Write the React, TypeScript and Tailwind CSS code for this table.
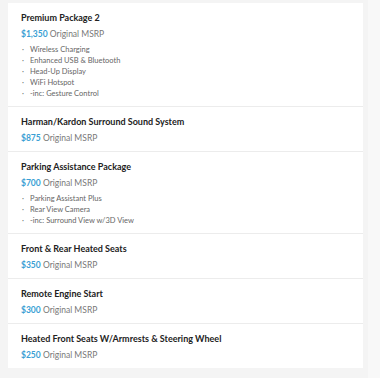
const packages = [
  {
    title: "Premium Package 2",
    price: "$1,350",
    items: ["Wireless Charging", "Enhanced USB & Bluetooth", "Head-Up Display", "WiFi Hotspot", "-inc: Gesture Control"],
  },
  { title: "Harman/Kardon Surround Sound System", price: "$875", items: [] },
  {
    title: "Parking Assistance Package",
    price: "$700",
    items: ["Parking Assistant Plus", "Rear View Camera", "-inc: Surround View w/3D View"],
  },
  { title: "Front & Rear Heated Seats", price: "$350", items: [] },
  { title: "Remote Engine Start", price: "$300", items: [] },
  { title: "Heated Front Seats W/Armrests & Steering Wheel", price: "$250", items: [] },
];

export default function App() {
  return (
    <div
      className="w-[380px] h-[378px] bg-[#f4f4f4] flex"
      style={{ fontFamily: 'Lato, "Open Sans", sans-serif' }}
    >
      <div className="w-[368px] pt-[3px] pl-[8px] pr-[5px]">
        <div className="flex flex-col gap-px bg-[#ececec]">
          {packages.map(p => (
            <div key={p.title} className="bg-white px-[13px] pt-[8px] pb-[6px]">
              <div className="h-[14px] text-[9px] leading-[14px] font-bold text-[#222]">{p.title}</div>
              <div className="h-[14px] text-[8.5px] leading-[14px] mt-[2px] text-[#777]">
                <span className="font-bold text-[#3a9fd4]">{p.price}</span> Original MSRP
              </div>
              {p.items.length > 0 && (
                <ul className="mt-[3px] mb-px">
                  {p.items.map(it => (
                    <li key={it} className="flex h-[11px] text-[7.5px] leading-[11px] text-[#666]">
                      <span className="w-[9px] pl-px">·</span>
                      <span>{it}</span>
                    </li>
                  ))}
                </ul>
              )}
            </div>
          ))}
        </div>
      </div>
      <div className="flex-1 bg-[#f8f8f8]" />
    </div>
  );
}
